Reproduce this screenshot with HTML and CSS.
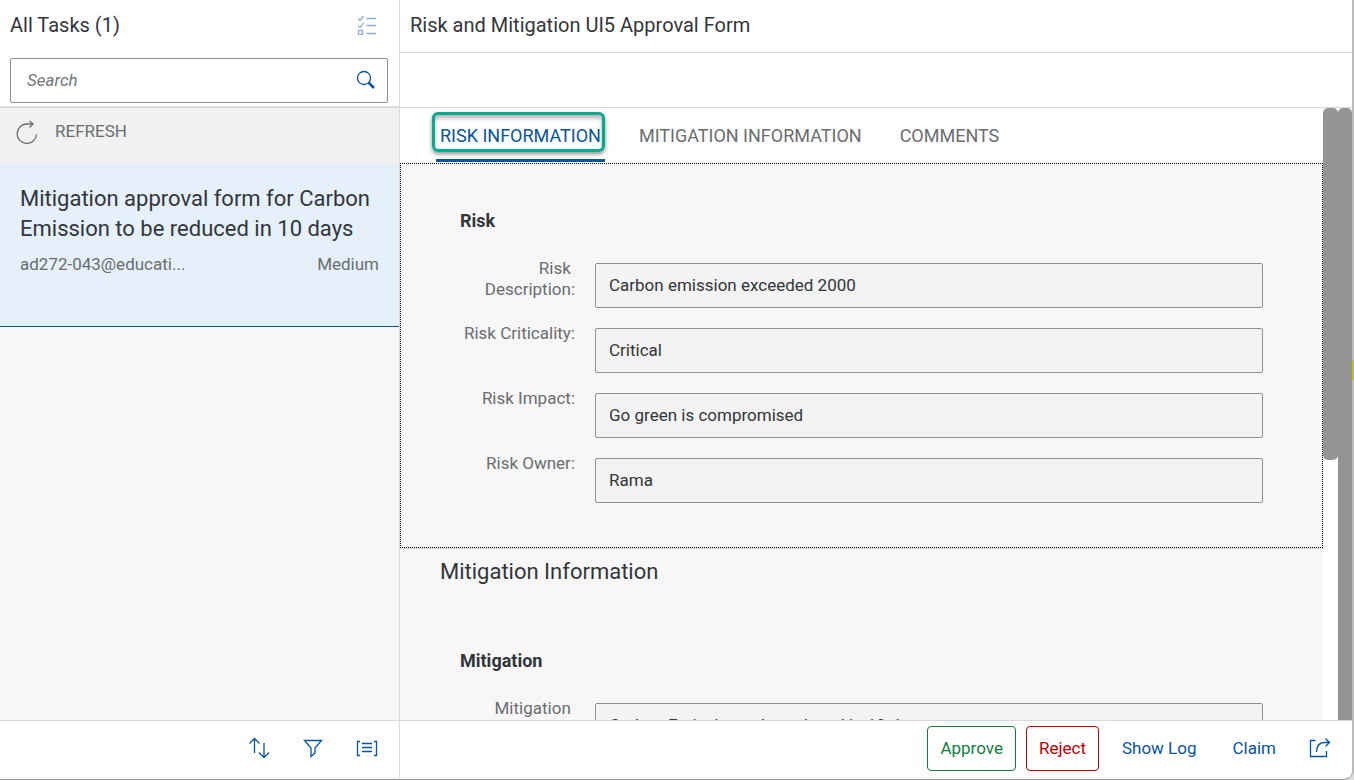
FILE: index.html
```html
<!DOCTYPE html>
<html lang="en">
<head>
<meta charset="utf-8">
<title>My Inbox</title>
<link rel="stylesheet" href="styles.css">
</head>
<body>
<div class="window">
  <div class="app">
    <aside class="master">
      <header class="master-head">
        <div class="title-row">
          <h1 class="title">All Tasks (1)</h1>
          <button class="icon-btn icon-btn--muted" type="button" aria-label="Multi-select">
            <svg width="20" height="20" viewBox="0 0 20 20"><path d="M1 3.500l2 2L6.500 1M1 10.500l2 2L6.500 8M1.500 15.500h4v4h-4zM9.500 3.500H19M9.500 10.500H19M9.500 18.500H19"/></svg>
          </button>
        </div>
        <form class="search">
          <input class="search-input" type="search" placeholder="Search" aria-label="Search">
          <button class="icon-btn" type="button" aria-label="Start search">
            <svg width="20" height="20" viewBox="0 0 20 20"><circle cx="8" cy="8" r="6.500"/><path d="M12.500 12.500L18 18" stroke-width="2.500"/></svg>
          </button>
        </form>
      </header>
      <button class="refresh" type="button">
        <svg width="24" height="24" viewBox="0 0 24 24"><path d="M21.500 14.500A9.700 9.700 0 1 1 11.500 4H18M14.500 1L18 4L14.500 7.500"/></svg>
        <span>REFRESH</span>
      </button>
      <ul class="task-list">
        <li class="task">
          <h2 class="task-title">Mitigation approval form for Carbon Emission to be reduced in 10 days</h2>
          <div class="task-meta"><span>ad272-043@educati...</span><span>Medium</span></div>
        </li>
      </ul>
      <footer class="bar bar--master">
        <button class="icon-btn" type="button" aria-label="Sort">
          <svg width="22" height="22" viewBox="0 0 22 22"><path d="M6.500 16V1.500M1.500 6.500l5-5l5 5M16 6v14.500M11 15.500l5 5l5-5"/></svg>
        </button>
        <button class="icon-btn" type="button" aria-label="Filter">
          <svg width="22" height="22" viewBox="0 0 22 22"><path d="M2.500 3.500h17L13 11v5l-4 3.500V11z"/></svg>
        </button>
        <button class="icon-btn" type="button" aria-label="Group">
          <svg width="22" height="22" viewBox="0 0 22 22"><path d="M4 4.500H1.500v14H4M18 4.500h2.500v14H18M6 6.500h10M6 10.500h10M6 14.500h10"/></svg>
        </button>
      </footer>
    </aside>
    <main class="detail">
      <header class="detail-head"><h1 class="title">Risk and Mitigation UI5 Approval Form</h1></header>
      <div class="subhead"></div>
      <div class="viewport">
        <div class="page">
          <nav class="tabs">
            <a class="tab tab--active" href="#risk">RISK INFORMATION</a>
            <a class="tab" href="#mitigation">MITIGATION INFORMATION</a>
            <a class="tab" href="#comments">COMMENTS</a>
          </nav>
          <section class="section section--focus" id="risk">
            <h3 class="group-title">Risk</h3>
            <div class="fields">
              <label class="label" for="risk-desc">Risk Description:</label>
              <input class="field" id="risk-desc" value="Carbon emission exceeded 2000" readonly>
              <label class="label" for="risk-crit">Risk Criticality:</label>
              <input class="field" id="risk-crit" value="Critical" readonly>
              <label class="label" for="risk-impact">Risk Impact:</label>
              <input class="field" id="risk-impact" value="Go green is compromised" readonly>
              <label class="label" for="risk-owner">Risk Owner:</label>
              <input class="field" id="risk-owner" value="Rama" readonly>
            </div>
          </section>
          <h2 class="section-title">Mitigation Information</h2>
          <section class="section" id="mitigation">
            <h3 class="group-title">Mitigation</h3>
            <div class="fields">
              <label class="label" for="mit-desc">Mitigation Description:</label>
              <input class="field" id="mit-desc" value="Carbon Emission to be reduced in 10 days" readonly>
            </div>
          </section>
        </div>
        <div class="scroll-track"><div class="scroll-thumb scroll-thumb--page"></div></div>
        <div class="scroll-track scroll-track--outer"><div class="scroll-thumb"></div></div>
      </div>
      <footer class="bar bar--detail">
        <button class="btn btn--accept" type="button">Approve</button>
        <button class="btn btn--reject" type="button">Reject</button>
        <button class="btn" type="button">Show Log</button>
        <button class="btn" type="button">Claim</button>
        <button class="icon-btn icon-btn--share" type="button" aria-label="Share">
          <svg width="22" height="22" viewBox="0 0 22 22"><path d="M6.500 3.500h-5v16h16V14M7.500 15c0-6 3-9.500 8-9.500h5M16.500 1.500l4 4l-4 4"/></svg>
        </button>
      </footer>
    </main>
  </div>
</div>
<div class="edge-mark"></div>
</body>
</html>
```
FILE: styles.css
```css
* { box-sizing: border-box; }

body {
  margin: 0;
  background: #dcdcdc;
  color: #32363a;
  font: 17px/21px Roboto, "Liberation Sans", sans-serif;
}

h1, h2, h3, ul { margin: 0; padding: 0; font-weight: 400; }
ul { list-style: none; }
button, input { font: inherit; color: inherit; }
button { cursor: pointer; }

svg {
  display: block;
  fill: none;
  stroke: currentColor;
  stroke-width: 1.3;
}

.window {
  height: 100vh;
  padding-bottom: 2px;
  overflow: hidden;
  background: #f7f7f7;
  border-right: 2px solid #bcbcbc;
  border-bottom: 1px solid #999;
  border-radius: 0 0 10px 0;
}

.edge-mark {
  position: absolute;
  top: 360px;
  right: 0;
  width: 2px;
  height: 20px;
  background: #bfc020;
}

.app {
  display: grid;
  grid-template-columns: 400px minmax(0, 1fr);
  height: 100%;
}

.master, .detail {
  display: flex;
  flex-direction: column;
  min-height: 0;
}

.master { border-right: 1px solid #d9d9d9; }

.master-head {
  height: 108px;
  padding: 0 11px 0 10px;
  background: #fff;
  border-bottom: 2px solid #dcdcdc;
}

.title { font-size: 20px; line-height: 24px; }

.title-row {
  display: flex;
  align-items: center;
  justify-content: space-between;
  height: 50px;
  margin-bottom: 8px;
}

.icon-btn {
  padding: 0;
  background: none;
  border: 0;
  color: #0854a0;
}

.icon-btn--muted { margin-right: 11px; opacity: .45; }

.search {
  display: flex;
  align-items: center;
  height: 45px;
  padding: 0 11px 1px 16px;
  border: 1px solid #89919a;
  border-radius: 2px;
}

.search-input {
  flex: 1;
  min-width: 0;
  padding: 0;
  background: none;
  border: 0;
  outline: 0;
}

.search-input::placeholder { color: #74777a; font-style: italic; opacity: 1; }

.refresh {
  display: flex;
  align-items: center;
  gap: 16px;
  height: 56px;
  padding: 0 15px 9px;
  background: #f1f1f1;
  border: 0;
  color: #6a6d70;
}

.task-list { flex: 1; }

.task {
  height: 163px;
  padding: 20px 20px 0;
  background: #e5f0fa;
  border-bottom: 1px solid #0854a0;
}

.task-title { font-size: 22px; line-height: 30px; }

.task-meta {
  display: flex;
  justify-content: space-between;
  margin-top: 10px;
  color: #6a6d70;
}

.bar {
  display: flex;
  flex: none;
  align-items: center;
  justify-content: flex-end;
  height: 57px;
  padding-bottom: 2px;
  background: #fff;
  border-top: 1px solid #d9d9d9;
}

.bar--master { gap: 32px; padding-right: 21px; }
.bar--detail { gap: 10px; padding-right: 21px; }

.btn {
  height: 45px;
  padding: 0 12px;
  background: #fff;
  border: 1px solid transparent;
  border-radius: 4px;
  color: #0854a0;
}

.btn--accept { border-color: #107e3e; color: #107e3e; }
.btn--reject { border-color: #b00; color: #b00; }
.icon-btn--share { margin-left: 10px; }

.detail-head {
  flex: none;
  height: 53px;
  padding: 13px 10px;
  background: #fff;
  border-bottom: 1px solid #d9d9d9;
}

.subhead {
  flex: none;
  height: 55px;
  background: #fff;
  border-bottom: 1px solid #d9d9d9;
}

.viewport { display: flex; flex: 1; min-height: 0; }
.page { flex: 1; min-width: 0; overflow: hidden; }

.tabs {
  display: flex;
  gap: 30px;
  height: 55px;
  padding: 0 36px 1px;
  background: #fff;
  font-size: 18px;
}

.tab {
  position: relative;
  padding: 17px 4px 13px;
  border-bottom: 3px solid transparent;
  color: #6a6d70;
  text-decoration: none;
  white-space: nowrap;
}

.tab--active { border-color: #0854a0; color: #0854a0; }

.tab--active::before {
  content: "";
  position: absolute;
  inset: 4px 0 7px -4px;
  border: 3px solid #04ab8c;
  border-radius: 6px;
  box-shadow: 0 2px 4px rgba(0, 0, 0, .45), inset 0 3px 4px rgba(0, 0, 0, .3);
}

.section { padding: 46px 59px 44px; border: 1px solid transparent; }
.section--focus { border: 1px dotted #000; }

.group-title { font-size: 18px; font-weight: 700; }

.fields {
  display: grid;
  grid-template-columns: 115px minmax(0, 1fr);
  gap: 15px 20px;
  margin-top: 27px;
}

.label { color: #6a6d70; text-align: right; white-space: break-spaces; }

.field {
  width: 100%;
  height: 45px;
  margin-top: 5px;
  padding: 0 13px 2px;
  background: #f3f3f3;
  border: 1px solid #89919a;
  border-radius: 2px;
}

.section-title {
  padding: 8px 40px 16px;
  border-top: 1px solid #d9d9d9;
  font-size: 22px;
  line-height: 30px;
}

.scroll-track { width: 15px; background: #fff; }
.scroll-track--outer { width: 14px; }
.scroll-thumb { height: 100%; background: #949494; border-radius: 5px 5px 0 0; }
.scroll-thumb--page { height: 352px; border-radius: 5px; }
```
